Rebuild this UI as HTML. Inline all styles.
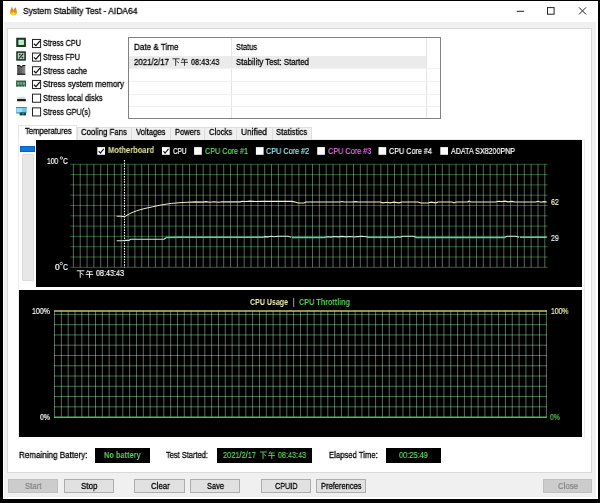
<!DOCTYPE html>
<html><head><meta charset="utf-8"><title>System Stability Test - AIDA64</title>
<style>
html,body{margin:0;padding:0;background:#000;}
body{width:600px;height:503px;position:relative;overflow:hidden;font-family:"Liberation Sans",sans-serif;}
.a{position:absolute;box-sizing:border-box;}
.t{will-change:transform;position:absolute;white-space:pre;transform-origin:0 50%;font-family:"Liberation Sans",sans-serif;}
.btn{position:absolute;box-sizing:border-box;height:14.2px;top:479.2px;background:#e1e1e1;border:1px solid #adadad;}
.btn.dis{background:#cccccc;border-color:#bfbfbf;}
.tab{position:absolute;box-sizing:border-box;top:126.6px;height:13px;background:#f0f0f0;border:1px solid #dedede;border-bottom:none;}
.box{position:absolute;background:#000;top:447.8px;height:15.6px;}
svg{position:absolute;left:0;top:0;}
</style></head><body>
<div class="a" style="left:2.8px;top:1px;width:595.3px;height:497.5px;background:#fff;"></div>
<div class="a" style="left:3.7px;top:22px;width:592.3px;height:474.7px;background:#f0f0f0;"></div>
<div class="a" style="left:7px;top:28px;width:585px;height:445.4px;background:#fff;border:1px solid #dadada;"></div>
<!-- table -->
<div class="a" style="left:127.6px;top:37.4px;width:313.4px;height:82px;background:#fff;border:1px solid #828282;"></div>
<div class="a" style="left:128.6px;top:56px;width:297.4px;height:11.6px;background:#ebebeb;"></div>
<div class="a" style="left:231.2px;top:38.4px;width:1px;height:80px;background:#e4e4e4;"></div>
<div class="a" style="left:426px;top:38.4px;width:1px;height:80px;background:#e4e4e4;"></div>
<div class="a" style="left:128.6px;top:67.8px;width:311px;height:1px;background:#f2f2f2;"></div>
<div class="a" style="left:128.6px;top:80.6px;width:311px;height:1px;background:#f0f0f0;"></div>
<div class="a" style="left:128.6px;top:93.6px;width:311px;height:1px;background:#f0f0f0;"></div>
<div class="a" style="left:128.6px;top:106px;width:311px;height:1px;background:#f0f0f0;"></div>
<!-- tab panel -->
<div class="a" style="left:18.4px;top:139px;width:567px;height:300px;background:#fff;border:1px solid #ececec;border-bottom:none"></div>
<div class="tab" style="left:76.6px;width:55.6px"></div>
<div class="tab" style="left:131.2px;width:39.6px"></div>
<div class="tab" style="left:169.8px;width:35.6px"></div>
<div class="tab" style="left:204.4px;width:33px"></div>
<div class="tab" style="left:236.4px;width:36.2px"></div>
<div class="tab" style="left:271.6px;width:40.2px"></div>
<div class="a" style="left:18.4px;top:124.6px;width:59px;height:15.4px;background:#fff;border:1px solid #e4e4e4;border-bottom:none"></div>
<!-- slider -->
<div class="a" style="left:22.3px;top:153.6px;width:11.4px;height:127.8px;background:#e7e7e7;border:1px solid #dcdcdc;border-radius:1px"></div>
<div class="a" style="left:20px;top:146px;width:14.8px;height:6.2px;background:#0a7ae0;border:1px solid #0a5fc0;"></div>
<!-- graphs -->
<div class="a" style="left:36px;top:140px;width:546px;height:147px;background:#000;"></div>
<div class="a" style="left:18.5px;top:289.8px;width:563.5px;height:147px;background:#000;"></div>
<!-- status boxes -->
<div class="box" style="left:95px;width:55px"></div>
<div class="box" style="left:217px;width:95px"></div>
<div class="box" style="left:386px;width:54.8px"></div>
<!-- buttons -->
<div class="btn dis" style="left:8px;width:50px"></div>
<div class="btn" style="left:63.6px;width:50.4px"></div>
<div class="btn" style="left:134.3px;width:50.4px"></div>
<div class="btn" style="left:190px;width:50px"></div>
<div class="btn" style="left:261px;width:49.8px"></div>
<div class="btn" style="left:315.6px;width:50.2px"></div>
<div class="btn dis" style="left:542.6px;width:49.6px"></div>
<svg width="600" height="503" viewBox="0 0 600 503">
<!-- title icon -->
<path d="M12 6.3C12.3 8.2 12.9 9.3 13.6 10.1C14.1 9 14.8 8.1 15.5 7.3C15.9 9 17.1 10.5 17 12.4C16.9 14.4 15.4 15.6 13.5 15.6C11.5 15.6 10.1 14.3 10 12.4C9.9 10.4 11.5 8.6 12 6.3Z" fill="url(#fl)"/><ellipse cx="13.4" cy="13.7" rx="1.9" ry="1.5" fill="#fbd93e" opacity="0.95"/>
<!-- window controls -->
<path d="M516.8 11.3H524.2" stroke="#222" stroke-width="1"/>
<rect x="547.5" y="7.6" width="6.6" height="6.6" fill="none" stroke="#222" stroke-width="1"/>
<path d="M579 7.4L586 14.4M586 7.4L579 14.4" stroke="#222" stroke-width="1"/>

<!-- cpu -->
<rect x="16.2" y="37.7" width="9.7" height="9.3" fill="#1c3a29"/><rect x="18.4" y="39.8" width="5.5" height="5.1" fill="#cdf3d5"/><rect x="19.8" y="41.2" width="2.8" height="2.4" fill="#b4e6bf"/>
<!-- fpu -->
<rect x="16.2" y="51.3" width="9.7" height="9.4" fill="#1e3a2b"/><rect x="17.8" y="52.9" width="6.5" height="6.2" fill="#bccdc1"/>
<path d="M23.2 53.6L18.9 58.6" stroke="#1d2f25" stroke-width="1.1" fill="none"/><circle cx="19.8" cy="54.6" r="0.9" fill="#1d2f25"/><circle cx="22.4" cy="57.6" r="0.9" fill="#1d2f25"/>
<!-- cache -->
<defs><linearGradient id="cg" x1="0" x2="1" y1="0" y2="0"><stop offset="0" stop-color="#4a4a4a"/><stop offset="0.5" stop-color="#666"/><stop offset="1" stop-color="#8c8c8c"/></linearGradient>
<linearGradient id="fl" x1="0" x2="0" y1="0" y2="1"><stop offset="0" stop-color="#b5651c"/><stop offset="0.55" stop-color="#e8921f"/><stop offset="1" stop-color="#f9d23a"/></linearGradient></defs>
<path d="M17.2 65h2.5l1.55 1.5l1.55-1.5h2.5v9.7H17.2z" fill="url(#cg)"/>
<path d="M17.2 65.5h2.4l1.65 1.5l1.65-1.5h2.4" stroke="#111" stroke-width="1" fill="none"/><path d="M17.2 74.2h8.1" stroke="#111" stroke-width="1" fill="none"/>
<!-- memory -->
<rect x="16.1" y="80.5" width="9.9" height="6.2" fill="#2a6446"/><rect x="17.3" y="82.2" width="2.3" height="2.4" fill="#7fae96"/><rect x="20.3" y="82.2" width="1.6" height="2.4" fill="#7fae96"/><rect x="22.7" y="82.2" width="2.3" height="2.4" fill="#7fae96"/><rect x="18.4" y="85.8" width="1" height="0.9" fill="#dfe9e2"/><rect x="21.4" y="85.8" width="1" height="0.9" fill="#dfe9e2"/><rect x="24" y="85.8" width="1" height="0.9" fill="#dfe9e2"/>
<!-- disk -->
<rect x="17.4" y="96.8" width="8" height="2.2" fill="#d4dcdc"/><rect x="17" y="98.9" width="8.9" height="2.3" rx="0.5" fill="#1c1c1c"/>
<!-- gpu -->
<rect x="16.1" y="107" width="10.7" height="6.2" fill="#6cc6e8"/><rect x="16.1" y="107" width="10.7" height="1" fill="#3a90b8"/><rect x="17" y="108.4" width="5.2" height="3.6" fill="#9be0f6"/><rect x="19.6" y="112.4" width="6.4" height="3" fill="#1d4438"/><rect x="22.2" y="113.2" width="1.6" height="1.2" fill="#3fae5a"/><rect x="16.1" y="112.6" width="3.5" height="0.9" fill="#3a90b8"/>

<rect x="32.5" y="39.449999999999996" width="8.1" height="8.1" fill="#fff" stroke="#222" stroke-width="1"/><path d="M33.90 43.77L35.91 45.59L40.00 40.86" stroke="#111" stroke-width="1.25" fill="none"/><rect x="32.5" y="53.05" width="8.1" height="8.1" fill="#fff" stroke="#222" stroke-width="1"/><path d="M33.90 57.37L35.91 59.19L40.00 54.46" stroke="#111" stroke-width="1.25" fill="none"/><rect x="32.5" y="66.75" width="8.1" height="8.1" fill="#fff" stroke="#222" stroke-width="1"/><path d="M33.90 71.07L35.91 72.89L40.00 68.16" stroke="#111" stroke-width="1.25" fill="none"/><rect x="32.5" y="80.45" width="8.1" height="8.1" fill="#fff" stroke="#222" stroke-width="1"/><path d="M33.90 84.77L35.91 86.59L40.00 81.86" stroke="#111" stroke-width="1.25" fill="none"/><rect x="32.5" y="94.14999999999999" width="8.1" height="8.1" fill="#fff" stroke="#222" stroke-width="1"/><rect x="32.5" y="107.85" width="8.1" height="8.1" fill="#fff" stroke="#222" stroke-width="1"/>
<!-- graph1 grid -->
<g style="mix-blend-mode:screen"><path d="M73.40 164.3V267.3M80.23 164.3V267.3M87.06 164.3V267.3M93.90 164.3V267.3M100.73 164.3V267.3M107.56 164.3V267.3M114.39 164.3V267.3M121.22 164.3V267.3M128.06 164.3V267.3M134.89 164.3V267.3M141.72 164.3V267.3M148.55 164.3V267.3M155.38 164.3V267.3M162.22 164.3V267.3M169.05 164.3V267.3M175.88 164.3V267.3M182.71 164.3V267.3M189.54 164.3V267.3M196.38 164.3V267.3M203.21 164.3V267.3M210.04 164.3V267.3M216.87 164.3V267.3M223.70 164.3V267.3M230.54 164.3V267.3M237.37 164.3V267.3M244.20 164.3V267.3M251.03 164.3V267.3M257.86 164.3V267.3M264.70 164.3V267.3M271.53 164.3V267.3M278.36 164.3V267.3M285.19 164.3V267.3M292.02 164.3V267.3M298.86 164.3V267.3M305.69 164.3V267.3M312.52 164.3V267.3M319.35 164.3V267.3M326.18 164.3V267.3M333.02 164.3V267.3M339.85 164.3V267.3M346.68 164.3V267.3M353.51 164.3V267.3M360.34 164.3V267.3M367.18 164.3V267.3M374.01 164.3V267.3M380.84 164.3V267.3M387.67 164.3V267.3M394.50 164.3V267.3M401.34 164.3V267.3M408.17 164.3V267.3M415.00 164.3V267.3M421.83 164.3V267.3M428.66 164.3V267.3M435.50 164.3V267.3M442.33 164.3V267.3M449.16 164.3V267.3M455.99 164.3V267.3M462.82 164.3V267.3M469.66 164.3V267.3M476.49 164.3V267.3M483.32 164.3V267.3M490.15 164.3V267.3M496.98 164.3V267.3M503.82 164.3V267.3M510.65 164.3V267.3M517.48 164.3V267.3M524.31 164.3V267.3M531.14 164.3V267.3M537.98 164.3V267.3M544.81 164.3V267.3" stroke="#6a766e" stroke-width="0.85" fill="none"/></g>
<g style="mix-blend-mode:screen"><path d="M70.3 164.30H547.6M70.3 174.60H547.6M70.3 184.90H547.6M70.3 195.20H547.6M70.3 205.50H547.6M70.3 215.80H547.6M70.3 226.10H547.6M70.3 236.40H547.6M70.3 246.70H547.6M70.3 257.00H547.6M70.3 267.30H547.6" stroke="#265d2f" stroke-width="1" fill="none"/></g>
<path d="M124.5 160V267.4" stroke="#fff" stroke-width="1.1" stroke-dasharray="1.5 1.17" fill="none"/>
<polyline points="166.0,237.6 180.0,237.3 263.0,237.3" stroke="#5fcca2" stroke-width="1.5" fill="none"/><polyline points="292.0,237.4 325.0,237.4" stroke="#5fcca2" stroke-width="1.5" fill="none"/><polyline points="368.0,237.3 396.0,237.3" stroke="#5fcca2" stroke-width="1.5" fill="none"/><polyline points="416.0,237.4 505.0,237.4" stroke="#5fcca2" stroke-width="1.5" fill="none"/><polyline points="520.0,237.3 546.8,237.2" stroke="#5fcca2" stroke-width="1.5" fill="none"/><polyline points="116.7,240.8 123.0,240.8 125.0,240.2 129.0,240.4 130.5,239.3 164.0,239.3 166.0,237.7" stroke="#d4e9de" stroke-width="1.1" fill="none"/><polyline points="263.0,237.2 265.0,236.6 268.0,236.9 271.0,236.3 274.0,236.7 278.0,236.2 288.0,236.2 291.0,237.3" stroke="#d4e9de" stroke-width="1.1" fill="none"/><polyline points="325.0,237.3 328.0,236.8 331.0,237.1 334.0,236.5 338.0,236.9 342.0,236.4 346.0,236.9 350.0,236.5 354.0,237.0 358.0,236.6 362.0,236.3 366.0,236.8 368.0,237.3" stroke="#d4e9de" stroke-width="1.1" fill="none"/><polyline points="396.0,237.3 398.0,236.8 400.0,237.2 403.0,236.2 413.0,236.2 416.0,237.3" stroke="#d4e9de" stroke-width="1.1" fill="none"/><polyline points="505.0,237.3 507.0,236.2 516.0,236.2 519.0,237.3" stroke="#d4e9de" stroke-width="1.1" fill="none"/>
<polyline points="116.7,216.2 121.0,216.2 124.5,216.8 128.0,214.6 132.0,212.6 136.7,210.8 142.0,209.2 147.0,208.0 152.7,206.8 160.0,205.2 166.0,204.2 171.3,203.4 180.0,202.7 188.0,202.2" stroke="#efecc8" stroke-width="1" fill="none"/><polyline points="188.0,202.2 195.3,201.9 203.0,202.1 206.0,201.7 210.0,202.2 214.0,201.8 219.0,202.2 222.0,201.8 240.0,201.9 242.0,201.4 246.0,201.5 250.0,201.2 256.0,201.5 262.0,201.3 292.0,201.4 296.0,202.2 298.0,203.0 304.0,203.0 306.0,202.0 340.0,202.0 342.0,201.5 344.0,202.0 352.0,202.0 356.0,201.6 358.0,202.0 380.0,202.0 383.0,202.8 387.0,202.3 390.0,202.9 394.0,202.2 399.0,202.8 402.0,202.0 418.0,202.0 421.0,203.0 428.0,203.0 431.0,202.2 436.0,202.8 438.0,202.0 452.0,202.0 454.0,202.9 456.0,202.0 468.0,202.0 469.0,201.2 471.0,202.0 496.0,202.0 498.0,201.3 502.0,201.6 505.0,201.2 508.0,201.8 512.0,201.4 515.0,202.0 536.0,202.0 538.0,201.3 541.0,202.2 544.0,201.6 546.8,202.0" stroke="#f4f0b8" stroke-width="1.15" fill="none"/>
<rect x="97.3" y="147.1" width="7.7" height="7.7" fill="#fff"/><path d="M98.70 151.10L100.38 153.11L103.80 148.79" stroke="#111" stroke-width="1.1" fill="none"/><rect x="162" y="147.1" width="7.7" height="7.7" fill="#fff"/><path d="M163.40 151.10L165.08 153.11L168.50 148.79" stroke="#111" stroke-width="1.1" fill="none"/><rect x="194.1" y="147.1" width="7.7" height="7.7" fill="#fff"/><rect x="255.9" y="147.1" width="7.7" height="7.7" fill="#fff"/><rect x="317.2" y="147.1" width="7.7" height="7.7" fill="#fff"/><rect x="378.5" y="147.1" width="7.7" height="7.7" fill="#fff"/><rect x="440.3" y="147.1" width="7.7" height="7.7" fill="#fff"/>
<circle cx="61.4" cy="158" r="1.2" fill="none" stroke="#fff" stroke-width="0.8"/>
<circle cx="61.3" cy="263.6" r="1.2" fill="none" stroke="#fff" stroke-width="0.8"/>
<path d="M76.80 270.81H84.40M80.22 270.81V277.80M80.98 272.94L83.64 274.91M88.03 270.20L86.51 272.78M87.50 271.72H92.59M85.60 274.38H93.20M89.55 271.72V277.80" stroke="#fff" stroke-width="0.9" fill="none"/>
<!-- graph2 grid -->
<g style="mix-blend-mode:screen"><path d="M54.50 311V417.2M61.33 311V417.2M68.16 311V417.2M75.00 311V417.2M81.83 311V417.2M88.66 311V417.2M95.49 311V417.2M102.32 311V417.2M109.16 311V417.2M115.99 311V417.2M122.82 311V417.2M129.65 311V417.2M136.48 311V417.2M143.32 311V417.2M150.15 311V417.2M156.98 311V417.2M163.81 311V417.2M170.64 311V417.2M177.48 311V417.2M184.31 311V417.2M191.14 311V417.2M197.97 311V417.2M204.80 311V417.2M211.64 311V417.2M218.47 311V417.2M225.30 311V417.2M232.13 311V417.2M238.96 311V417.2M245.80 311V417.2M252.63 311V417.2M259.46 311V417.2M266.29 311V417.2M273.12 311V417.2M279.96 311V417.2M286.79 311V417.2M293.62 311V417.2M300.45 311V417.2M307.28 311V417.2M314.12 311V417.2M320.95 311V417.2M327.78 311V417.2M334.61 311V417.2M341.44 311V417.2M348.28 311V417.2M355.11 311V417.2M361.94 311V417.2M368.77 311V417.2M375.60 311V417.2M382.44 311V417.2M389.27 311V417.2M396.10 311V417.2M402.93 311V417.2M409.76 311V417.2M416.60 311V417.2M423.43 311V417.2M430.26 311V417.2M437.09 311V417.2M443.92 311V417.2M450.76 311V417.2M457.59 311V417.2M464.42 311V417.2M471.25 311V417.2M478.08 311V417.2M484.92 311V417.2M491.75 311V417.2M498.58 311V417.2M505.41 311V417.2M512.24 311V417.2M519.08 311V417.2M525.91 311V417.2M532.74 311V417.2M539.57 311V417.2M546.40 311V417.2" stroke="#6e7a72" stroke-width="0.85" fill="none"/></g>
<g style="mix-blend-mode:screen"><path d="M54 314.40H547M54 324.67H547M54 334.94H547M54 345.21H547M54 355.48H547M54 365.75H547M54 376.02H547M54 386.29H547M54 396.56H547M54 406.83H547" stroke="#3a6e44" stroke-width="1" fill="none"/></g>
<path d="M54 417.2H547" stroke="#3fc24a" stroke-width="1.6" fill="none"/>
<path d="M54 311H547" stroke="#c4c472" stroke-width="1.6" fill="none"/>
<path d="M172.40 58.81H179.60M175.64 58.81V65.80M176.36 60.94L178.88 62.91M183.10 58.20L181.66 60.78M182.60 59.72H187.42M180.80 62.38H188.00M184.54 59.72V65.80" stroke="#111" stroke-width="0.8" fill="none"/>
<path d="M259.90 452.01H266.90M263.05 452.01V459.00M263.75 454.14L266.20 456.11M270.34 451.40L268.94 453.98M269.85 452.92H274.54M268.10 455.58H275.10M271.74 452.92V459.00" stroke="#5fd25f" stroke-width="0.9" fill="none"/>
</svg>
<span class="t" style="-webkit-text-stroke:0.3px #000;left:22.50px;top:5.92px;font-size:9.3px;line-height:11.16px;color:#000;font-weight:400;transform:scaleX(0.9131)">System Stability Test - AIDA64</span>
<span class="t" style="-webkit-text-stroke:0.3px #000;left:43.00px;top:38.30px;font-size:9px;line-height:10.8px;color:#000;font-weight:400;transform:scaleX(0.8082)">Stress CPU</span>
<span class="t" style="-webkit-text-stroke:0.3px #000;left:43.00px;top:51.90px;font-size:9px;line-height:10.8px;color:#000;font-weight:400;transform:scaleX(0.8041)">Stress FPU</span>
<span class="t" style="-webkit-text-stroke:0.3px #000;left:43.00px;top:65.60px;font-size:9px;line-height:10.8px;color:#000;font-weight:400;transform:scaleX(0.8456)">Stress cache</span>
<span class="t" style="-webkit-text-stroke:0.3px #000;left:43.00px;top:79.30px;font-size:9px;line-height:10.8px;color:#000;font-weight:400;transform:scaleX(0.8851)">Stress system memory</span>
<span class="t" style="-webkit-text-stroke:0.3px #000;left:43.00px;top:93.00px;font-size:9px;line-height:10.8px;color:#000;font-weight:400;transform:scaleX(0.8572)">Stress local disks</span>
<span class="t" style="-webkit-text-stroke:0.3px #000;left:43.00px;top:106.70px;font-size:9px;line-height:10.8px;color:#000;font-weight:400;transform:scaleX(0.8170)">Stress GPU(s)</span>
<span class="t" style="-webkit-text-stroke:0.3px #000;left:133.50px;top:42.20px;font-size:9px;line-height:10.8px;color:#000;font-weight:400;transform:scaleX(0.8984)">Date &amp; Time</span>
<span class="t" style="-webkit-text-stroke:0.3px #000;left:236.00px;top:42.20px;font-size:9px;line-height:10.8px;color:#000;font-weight:400;transform:scaleX(0.8230)">Status</span>
<span class="t" style="-webkit-text-stroke:0.3px #000;left:133.60px;top:56.90px;font-size:9px;line-height:10.8px;color:#000;font-weight:400;transform:scaleX(0.8740)">2021/2/17</span>
<span class="t" style="-webkit-text-stroke:0.3px #000;left:191.00px;top:56.90px;font-size:9px;line-height:10.8px;color:#000;font-weight:400;transform:scaleX(0.8103)">08:43:43</span>
<span class="t" style="-webkit-text-stroke:0.3px #000;left:236.00px;top:56.90px;font-size:9px;line-height:10.8px;color:#000;font-weight:400;transform:scaleX(0.8652)">Stability Test: Started</span>
<span class="t" style="-webkit-text-stroke:0.3px #000;left:25.10px;top:125.80px;font-size:9px;line-height:10.8px;color:#000;font-weight:400;transform:scaleX(0.8486)">Temperatures</span>
<span class="t" style="-webkit-text-stroke:0.3px #000;left:81.10px;top:127.30px;font-size:9px;line-height:10.8px;color:#000;font-weight:400;transform:scaleX(0.8655)">Cooling Fans</span>
<span class="t" style="-webkit-text-stroke:0.3px #000;left:136.30px;top:127.30px;font-size:9px;line-height:10.8px;color:#000;font-weight:400;transform:scaleX(0.8514)">Voltages</span>
<span class="t" style="-webkit-text-stroke:0.3px #000;left:174.70px;top:127.30px;font-size:9px;line-height:10.8px;color:#000;font-weight:400;transform:scaleX(0.8429)">Powers</span>
<span class="t" style="-webkit-text-stroke:0.3px #000;left:208.80px;top:127.30px;font-size:9px;line-height:10.8px;color:#000;font-weight:400;transform:scaleX(0.8588)">Clocks</span>
<span class="t" style="-webkit-text-stroke:0.3px #000;left:241.30px;top:127.30px;font-size:9px;line-height:10.8px;color:#000;font-weight:400;transform:scaleX(0.9245)">Unified</span>
<span class="t" style="-webkit-text-stroke:0.3px #000;left:275.50px;top:127.30px;font-size:9px;line-height:10.8px;color:#000;font-weight:400;transform:scaleX(0.8663)">Statistics</span>
<span class="t" style="left:108.00px;top:146.32px;font-size:8.3px;line-height:9.96px;color:#e6e6a0;font-weight:700;transform:scaleX(0.9072)">Motherboard</span>
<span class="t" style="-webkit-text-stroke:0.2px #ffffff;left:173.00px;top:146.20px;font-size:8.5px;line-height:10.2px;color:#ffffff;font-weight:400;transform:scaleX(0.7520)">CPU</span>
<span class="t" style="-webkit-text-stroke:0.2px #66d866;left:204.80px;top:146.20px;font-size:8.5px;line-height:10.2px;color:#66d866;font-weight:400;transform:scaleX(0.8524)">CPU Core #1</span>
<span class="t" style="-webkit-text-stroke:0.2px #8fe6ea;left:266.00px;top:146.20px;font-size:8.5px;line-height:10.2px;color:#8fe6ea;font-weight:400;transform:scaleX(0.8544)">CPU Core #2</span>
<span class="t" style="-webkit-text-stroke:0.2px #e070e0;left:327.90px;top:146.20px;font-size:8.5px;line-height:10.2px;color:#e070e0;font-weight:400;transform:scaleX(0.8583)">CPU Core #3</span>
<span class="t" style="-webkit-text-stroke:0.2px #ffffff;left:389.20px;top:146.20px;font-size:8.5px;line-height:10.2px;color:#ffffff;font-weight:400;transform:scaleX(0.8485)">CPU Core #4</span>
<span class="t" style="-webkit-text-stroke:0.2px #ffffff;left:450.50px;top:146.20px;font-size:8.5px;line-height:10.2px;color:#ffffff;font-weight:400;transform:scaleX(0.8344)">ADATA SX8200PNP</span>
<span class="t" style="-webkit-text-stroke:0.2px #fff;left:47.20px;top:157.08px;font-size:8.2px;line-height:9.84px;color:#fff;font-weight:400;transform:scaleX(0.8192)">100</span>
<span class="t" style="-webkit-text-stroke:0.2px #fff;left:63.20px;top:157.08px;font-size:8.2px;line-height:9.84px;color:#fff;font-weight:400;transform:scaleX(0.8106)">C</span>
<span class="t" style="-webkit-text-stroke:0.2px #fff;left:55.00px;top:263.38px;font-size:8.2px;line-height:9.84px;color:#fff;font-weight:400;transform:scaleX(1.0301)">0</span>
<span class="t" style="-webkit-text-stroke:0.2px #fff;left:63.30px;top:263.38px;font-size:8.2px;line-height:9.84px;color:#fff;font-weight:400;transform:scaleX(0.8443)">C</span>
<span class="t" style="-webkit-text-stroke:0.2px #f4f4cc;left:550.60px;top:197.20px;font-size:8.5px;line-height:10.2px;color:#f4f4cc;font-weight:400;transform:scaleX(0.8238)">62</span>
<span class="t" style="-webkit-text-stroke:0.2px #e4eef2;left:550.60px;top:232.50px;font-size:8.5px;line-height:10.2px;color:#e4eef2;font-weight:400;transform:scaleX(0.8238)">29</span>
<span class="t" style="-webkit-text-stroke:0.2px #fff;left:96.00px;top:269.32px;font-size:8.3px;line-height:9.96px;color:#fff;font-weight:400;transform:scaleX(0.8670)">08:43:43</span>
<span class="t" style="left:250.40px;top:296.56px;font-size:8.4px;line-height:10.08px;color:#eeeeb0;font-weight:700;transform:scaleX(0.8415)">CPU Usage</span>
<span class="t" style="-webkit-text-stroke:0.2px #fff;left:292.80px;top:296.56px;font-size:8.4px;line-height:10.08px;color:#fff;font-weight:400;transform:scaleX(0.6400)">|</span>
<span class="t" style="left:299.00px;top:296.56px;font-size:8.4px;line-height:10.08px;color:#58c858;font-weight:700;transform:scaleX(0.8630)">CPU Throttling</span>
<span class="t" style="-webkit-text-stroke:0.2px #fff;left:32.00px;top:306.62px;font-size:8.3px;line-height:9.96px;color:#fff;font-weight:400;transform:scaleX(0.8477)">100%</span>
<span class="t" style="-webkit-text-stroke:0.2px #fff;left:40.00px;top:412.72px;font-size:8.3px;line-height:9.96px;color:#fff;font-weight:400;transform:scaleX(0.8333)">0%</span>
<span class="t" style="-webkit-text-stroke:0.2px #f2f2b4;left:551.00px;top:306.62px;font-size:8.3px;line-height:9.96px;color:#f2f2b4;font-weight:400;transform:scaleX(0.8241)">100%</span>
<span class="t" style="-webkit-text-stroke:0.2px #58c858;left:550.30px;top:412.72px;font-size:8.3px;line-height:9.96px;color:#58c858;font-weight:400;transform:scaleX(0.8333)">0%</span>
<span class="t" style="-webkit-text-stroke:0.3px #000;left:18.50px;top:450.10px;font-size:9px;line-height:10.8px;color:#000;font-weight:400;transform:scaleX(0.8949)">Remaining Battery:</span>
<span class="t" style="left:104.00px;top:450.38px;font-size:8.7px;line-height:10.44px;color:#5fd25f;font-weight:700;transform:scaleX(0.8495)">No battery</span>
<span class="t" style="-webkit-text-stroke:0.3px #000;left:166.00px;top:450.10px;font-size:9px;line-height:10.8px;color:#000;font-weight:400;transform:scaleX(0.8292)">Test Started:</span>
<span class="t" style="-webkit-text-stroke:0.2px #5fd25f;left:222.50px;top:450.28px;font-size:8.7px;line-height:10.44px;color:#5fd25f;font-weight:400;transform:scaleX(0.8537)">2021/2/17</span>
<span class="t" style="-webkit-text-stroke:0.2px #5fd25f;left:278.20px;top:450.28px;font-size:8.7px;line-height:10.44px;color:#5fd25f;font-weight:400;transform:scaleX(0.8307)">08:43:43</span>
<span class="t" style="-webkit-text-stroke:0.3px #000;left:328.70px;top:450.10px;font-size:9px;line-height:10.8px;color:#000;font-weight:400;transform:scaleX(0.8557)">Elapsed Time:</span>
<span class="t" style="-webkit-text-stroke:0.2px #5fd25f;left:399.30px;top:450.28px;font-size:8.7px;line-height:10.44px;color:#5fd25f;font-weight:400;transform:scaleX(0.8514)">00:25:49</span>
<span class="t" style="-webkit-text-stroke:0.2px #838383;left:24.50px;top:481.10px;font-size:9px;line-height:10.8px;color:#838383;font-weight:400;transform:scaleX(0.8677)">Start</span>
<span class="t" style="-webkit-text-stroke:0.3px #000;left:80.50px;top:481.10px;font-size:9px;line-height:10.8px;color:#000;font-weight:400;transform:scaleX(0.8911)">Stop</span>
<span class="t" style="-webkit-text-stroke:0.3px #000;left:150.60px;top:481.10px;font-size:9px;line-height:10.8px;color:#000;font-weight:400;transform:scaleX(0.8738)">Clear</span>
<span class="t" style="-webkit-text-stroke:0.3px #000;left:206.50px;top:481.10px;font-size:9px;line-height:10.8px;color:#000;font-weight:400;transform:scaleX(0.8286)">Save</span>
<span class="t" style="-webkit-text-stroke:0.3px #000;left:274.50px;top:481.10px;font-size:9px;line-height:10.8px;color:#000;font-weight:400;transform:scaleX(0.8031)">CPUID</span>
<span class="t" style="-webkit-text-stroke:0.3px #000;left:320.50px;top:481.10px;font-size:9px;line-height:10.8px;color:#000;font-weight:400;transform:scaleX(0.8345)">Preferences</span>
<span class="t" style="-webkit-text-stroke:0.2px #838383;left:557.50px;top:481.10px;font-size:9px;line-height:10.8px;color:#838383;font-weight:400;transform:scaleX(0.8690)">Close</span>
</body></html>
